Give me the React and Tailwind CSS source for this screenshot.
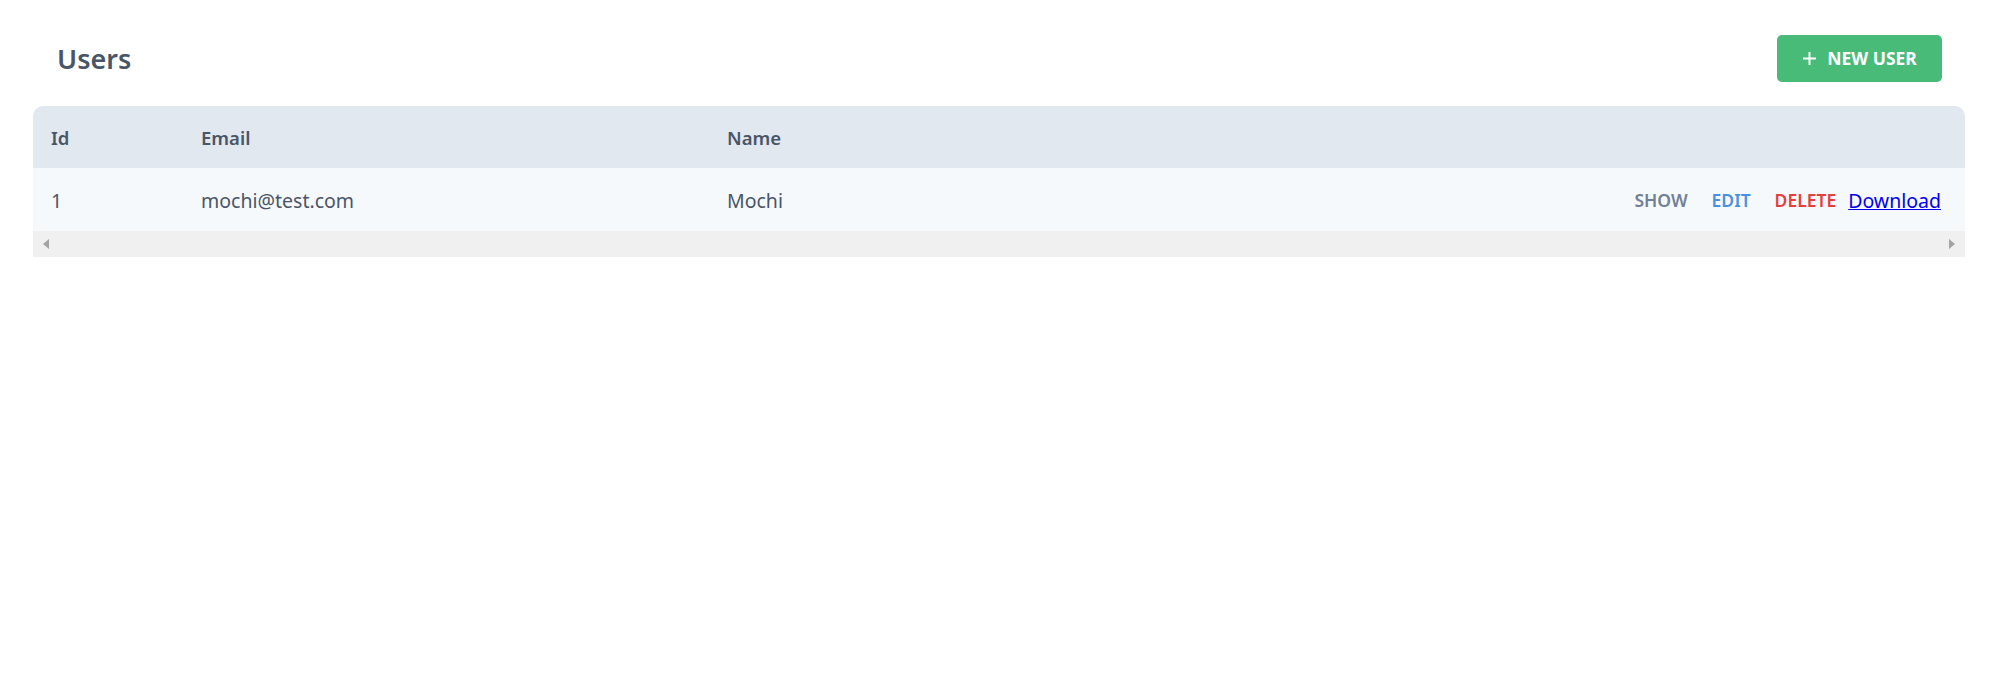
import React from "react";

export default function App() {
  const font = { fontFamily: '"Noto Sans", "Open Sans", sans-serif' };
  return (
    <div className="min-h-[680px] bg-white text-[#4a5568]" style={font}>
      <div className="ml-[33px] mr-[35px] pt-[35px]">
        <div className="flex items-center justify-between pl-[24px] pr-[23px]">
          <h1 className="text-[27px] font-semibold leading-none text-[#4a5568]">Users</h1>
          <button className="flex h-[47px] w-[165px] items-center justify-center gap-[10px] rounded-[5px] bg-[#48bb78] text-[17.5px] font-bold text-white">
            <svg width="15" height="15" viewBox="0 0 15 15" className="shrink-0">
              <path d="M7.5 1v13M1 7.5h13" stroke="white" strokeWidth="2" />
            </svg>
            <span>NEW USER</span>
          </button>
        </div>
        <div className="mt-[24px] overflow-hidden rounded-t-[10px]">
          <div className="flex h-[62px] items-center bg-[#e2e8f0] pt-[2px] text-[18.5px] font-semibold text-[#4a5568]">
            <div className="w-[150px] pl-[18px]">Id</div>
            <div className="w-[526px] pl-[18px]">Email</div>
            <div className="flex-1 pl-[18px]">Name</div>
          </div>
          <div className="flex h-[63px] items-center bg-[#f6f9fc] pt-[2px] text-[19.5px] text-[#4a5568]">
            <div className="w-[150px] pl-[18px]">1</div>
            <div className="w-[526px] pl-[18px]">mochi@test.com</div>
            <div className="flex-1 pl-[18px]">Mochi</div>
            <div className="flex items-center pr-[24px]">
              <span className="px-[12px] text-[17.5px] font-semibold text-[#718096]">SHOW</span>
              <span className="px-[12px] text-[17.5px] font-semibold text-[#4a90e2]">EDIT</span>
              <span className="pl-[12px] pr-[12px] text-[17.5px] font-semibold text-[#e53e3e]">DELETE</span>
              <a className="text-[19.5px] text-[#0000ee] underline">Download</a>
            </div>
          </div>
          <div className="flex h-[26px] items-center justify-between bg-[#f0f0f0] px-[10px]">
            <svg width="6" height="10" viewBox="0 0 6 10">
              <path d="M6 0v10L0 5z" fill="#a3a3a3" />
            </svg>
            <svg width="6" height="10" viewBox="0 0 6 10">
              <path d="M0 0v10l6-5z" fill="#a3a3a3" />
            </svg>
          </div>
        </div>
      </div>
    </div>
  );
}
